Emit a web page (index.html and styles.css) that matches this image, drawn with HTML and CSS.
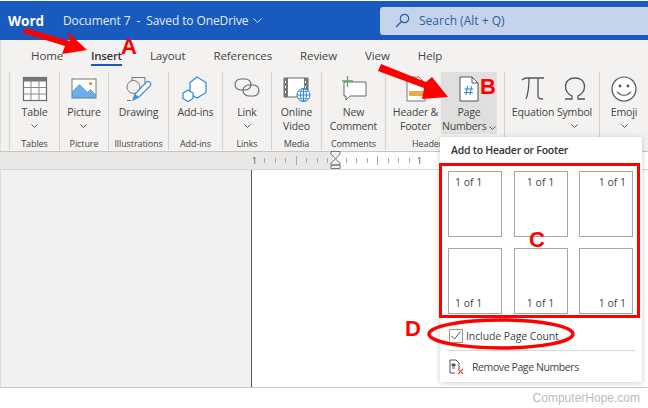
FILE: index.html
```html
<!DOCTYPE html>
<html lang="en">

<head>
    <title>Word page numbers</title>
    <meta charset="UTF-8">
    <meta name="viewport" content="width=device-width, initial-scale=1">
    <link rel="stylesheet" href="styles.css">
</head>

<body>
    <div class="app">
        <header class="titlebar">
            <div class="logo">Word</div>
            <div class="docname">Document 7 &nbsp;-&nbsp; Saved to OneDrive
                <svg class="chev" width="9" height="5" viewBox="0 0 9 5"><path d="M.5.5l4 4 4-4" fill="none" stroke="#dce6f5" stroke-width="1"/></svg>
            </div>
            <div class="search">
                <svg width="15" height="15" viewBox="0 0 15 15"><circle cx="9.5" cy="5.5" r="4.2" fill="none" stroke="#2b5fa8" stroke-width="1.2"/><path d="M6.5 8.5L1 14" stroke="#2b5fa8" stroke-width="1.4"/></svg>
                <span>Search (Alt + Q)</span>
            </div>
        </header>

        <nav class="tabs">
            <span>Home</span>
            <span class="active">Insert</span>
            <span>Layout</span>
            <span>References</span>
            <span>Review</span>
            <span>View</span>
            <span>Help</span>
        </nav>

        <section class="ribbon">
            <div class="group g-table">
                <div class="btns">
                    <div class="btn">
                        <svg class="ico" width="26" height="26" viewBox="0 0 26 26"><rect x="1.5" y="1.5" width="23" height="23" fill="#fff" stroke="#6b6b6b" stroke-width="1.2"/><path d="M1.5 1.5h23v4h-23z" fill="#777"/><path d="M1.5 11.5h23M1.5 18h23M9 5v19M17 5v19" stroke="#8a8a8a" fill="none"/></svg>
                        <div class="lbl">Table</div>
                        <svg class="drop" width="7" height="4" viewBox="0 0 7 4"><path d="M.5.5l3 3 3-3" fill="none" stroke="#555"/></svg>
                    </div>
                </div>
                <div class="glabel">Tables</div>
            </div>
            <div class="group g-picture">
                <div class="btns">
                    <div class="btn">
                        <svg class="ico" width="26" height="26" viewBox="0 0 26 26"><rect x="1" y="3" width="24" height="19" fill="#fff" stroke="#777"/><path d="M1.5 21.500v-6l7-7 8 8 3-3 5 5v3z" fill="#6aaeea" stroke="#3f87cc" stroke-width=".6"/><circle cx="19.5" cy="7.5" r="1.6" fill="#e8873a"/></svg>
                        <div class="lbl">Picture</div>
                        <svg class="drop" width="7" height="4" viewBox="0 0 7 4"><path d="M.5.5l3 3 3-3" fill="none" stroke="#555"/></svg>
                    </div>
                </div>
                <div class="glabel">Picture</div>
            </div>
            <div class="group g-draw">
                <div class="btns">
                    <div class="btn">
                        <svg class="ico" width="26" height="26" viewBox="0 0 26 26"><path d="M6 5V1.5h13V8" fill="none" stroke="#777"/><circle cx="7.500" cy="11" r="6.500" fill="none" stroke="#777"/><path d="M1 24.500h4" stroke="#777"/><path d="M7 24l2-6L20 6.500a2 2 0 0 1 4 3.500L13 21z" fill="#fff" stroke="#3d8fd6" stroke-width="1.200"/><path d="M7 24l2-6 4 3z" fill="#3d8fd6"/></svg>
                        <div class="lbl">Drawing</div>
                    </div>
                </div>
                <div class="glabel">Illustrations</div>
            </div>
            <div class="group g-addins">
                <div class="btns">
                    <div class="btn">
                        <svg class="ico" width="26" height="26" viewBox="0 0 26 26"><path d="M15 1l9 5.500v10L15 22l-7-4V6.500z" fill="#fff" stroke="#2b88d8" stroke-width="1.200"/><path d="M6 14l5 3v5.500L6 25.500l-5-3V17z" fill="#fff" stroke="#2b88d8" stroke-width="1.200"/></svg>
                        <div class="lbl">Add-ins</div>
                    </div>
                </div>
                <div class="glabel">Add-ins</div>
            </div>
            <div class="group g-link">
                <div class="btns">
                    <div class="btn">
                        <svg class="ico" width="26" height="26" viewBox="0 0 26 26"><rect x="1" y="3" width="16" height="11" rx="5.500" fill="none" stroke="#666" stroke-width="1.100"/><rect x="9" y="9" width="16" height="11" rx="5.500" fill="none" stroke="#666" stroke-width="1.100"/></svg>
                        <div class="lbl">Link</div>
                        <svg class="drop" width="7" height="4" viewBox="0 0 7 4"><path d="M.5.5l3 3 3-3" fill="none" stroke="#555"/></svg>
                    </div>
                </div>
                <div class="glabel">Links</div>
            </div>
            <div class="group g-media">
                <div class="btns">
                    <div class="btn">
                        <svg class="ico" width="28" height="26" viewBox="0 0 28 26"><path d="M1 2h24v19H1z" fill="#fff" stroke="#666"/><path d="M1 2h4v19H1zM21 2h4v19h-4z" fill="#777"/><path d="M2.500 5v2M2.500 10v2M2.500 15v2M22.500 5v2M22.500 10v2" stroke="#fff"/><circle cx="20.500" cy="19" r="6.500" fill="#fff" stroke="#2b88d8"/><path d="M14 19h13M20.500 12.500v13" stroke="#2b88d8"/><ellipse cx="20.500" cy="19" rx="3" ry="6.500" fill="none" stroke="#2b88d8"/><path d="M15 15.500h11M15 22.500h11" stroke="#2b88d8" stroke-width=".7"/></svg>
                        <div class="lbl">Online<br>Video</div>
                    </div>
                </div>
                <div class="glabel">Media</div>
            </div>
            <div class="group g-comments">
                <div class="btns">
                    <div class="btn">
                        <svg class="ico" width="26" height="26" viewBox="0 0 26 26"><path d="M3 6h22v14H9l-4 4v-4H3z" fill="#fff" stroke="#666"/><path d="M6.500 0v11M1 5h11" stroke="#5aa469" stroke-width="1.300"/></svg>
                        <div class="lbl">New<br>Comment</div>
                    </div>
                </div>
                <div class="glabel">Comments</div>
            </div>
            <div class="group g-header">
                <div class="btns">
                    <div class="btn b-hf">
                        <svg class="ico" width="20" height="26" viewBox="0 0 20 26"><path d="M1 1h12l6 6v18H1z" fill="#fff" stroke="#777"/><rect x="3" y="15" width="14" height="5" fill="#eba94a"/></svg>
                        <div class="lbl">Header &amp;<br>Footer</div>
                    </div>
                    <div class="btn b-page">
                        <svg class="ico" width="20" height="26" viewBox="0 0 20 26"><path d="M1 1h12l6 6v18H1z" fill="#fff" stroke="#555"/><path d="M13 1v6h6" fill="none" stroke="#555"/><path d="M8.500 10l-1.500 9M12.500 10l-1.500 9M5.500 13h9M5 16.500h9" stroke="#2b88d8" stroke-width="1.100"/></svg>
                        <div class="lbl">Page<br>Numbers <svg width="7" height="4" viewBox="0 0 7 4"><path d="M.5.5l3 3 3-3" fill="none" stroke="#555"/></svg></div>
                    </div>
                </div>
                <div class="glabel glabel-header">Header</div>
            </div>
            <div class="group g-symbols">
                <div class="btns">
                    <div class="btn b-eq">
                        <svg class="ico" width="24" height="26" viewBox="0 0 24 26"><path d="M1 4c2-2 3-2 5-2h17M8 2c0 9-1 16-3 21M17 2v18c0 2 1 3 5 3" fill="none" stroke="#555" stroke-width="1.300"/></svg>
                        <div class="lbl">Equation</div>
                    </div>
                    <div class="btn b-sym">
                        <svg class="ico" width="24" height="26" viewBox="0 0 24 26"><path d="M2 23h7v-3C5 18 2.500 15 2.500 10.500 2.500 5 6.500 2 12 2s9.500 3 9.500 8.500c0 4.500-2.500 7.500-6.500 9.500v3h7" fill="none" stroke="#555" stroke-width="1.300"/></svg>
                        <div class="lbl">Symbol</div>
                        <svg class="drop" width="7" height="4" viewBox="0 0 7 4"><path d="M.5.5l3 3 3-3" fill="none" stroke="#555"/></svg>
                    </div>
                </div>
            </div>
            <div class="group g-emoji">
                <div class="btns">
                    <div class="btn">
                        <svg class="ico" width="26" height="26" viewBox="0 0 26 26"><circle cx="13" cy="13" r="12" fill="#fff" stroke="#555" stroke-width="1.200"/><circle cx="9" cy="10" r="1.400" fill="#555"/><circle cx="17" cy="10" r="1.400" fill="#555"/><path d="M6.500 15.500c2 5 11 5 13 0" fill="none" stroke="#555" stroke-width="1.200"/></svg>
                        <div class="lbl">Emoji</div>
                        <svg class="drop" width="7" height="4" viewBox="0 0 7 4"><path d="M.5.5l3 3 3-3" fill="none" stroke="#555"/></svg>
                    </div>
                </div>
            </div>
        </section>

        <div class="ruler">
            <div class="ruler-off">
                <span class="num">1</span>
                <i></i><i></i><i></i><i class="long"></i><i></i><i></i><i></i>
            </div>
            <div class="ruler-on">
                <i></i><i></i><i></i><i class="long"></i><i></i><i></i><i></i><span class="num">1</span>
            </div>
        </div>

        <main class="docarea">
            <div class="margin"></div>
            <div class="page"></div>
        </main>

        <footer class="credit">ComputerHope.com</footer>

        <!-- indent marker on the ruler -->
        <svg class="indent" width="11" height="18" viewBox="0 0 11 18"><path d="M1 .5h9V3L5.500 8 1 3zM5.500 8L10 12v2H1v-2zM1 14h9v3.500H1z" fill="#f3f2f1" stroke="#777"/></svg>

        <div class="popup">
            <div class="popup-title">Add to Header or Footer</div>
            <div class="gallery">
                <div class="thumb t-left">1 of 1</div>
                <div class="thumb t-mid">1 of 1</div>
                <div class="thumb t-right">1 of 1</div>
                <div class="thumb t-left t-bottom">1 of 1</div>
                <div class="thumb t-mid t-bottom">1 of 1</div>
                <div class="thumb t-right t-bottom">1 of 1</div>
            </div>
            <div class="include">
                <span class="check"><svg width="10" height="9" viewBox="0 0 10 9"><path d="M.5 5l3 3 6-7.500" fill="none" stroke="#555"/></svg></span>
                <span>Include Page Count</span>
            </div>
            <div class="remove">
                <svg width="15" height="16" viewBox="0 0 15 16"><path d="M1 1h6l3 3v6M1 1v13h5" fill="none" stroke="#555"/><path d="M3 5h3v2H3zM3 9h3" stroke="#555" fill="#555"/><path d="M9 10l5 5M14 10l-5 5" stroke="#e8474c" stroke-width="1.100"/></svg>
                <span>Remove Page Numbers</span>
            </div>
        </div>

        <!-- red annotations -->
        <svg class="marks" width="648" height="408" viewBox="0 0 648 408">
            <polygon points="25,28 23,33 65,46 62,54 87,50 68,32 70,41" fill="#f00"/>
            <polygon points="381,64 378,71 424,88 422,99 448,97 432,77 426,82" fill="#f00"/>
            <ellipse cx="501" cy="334" rx="72" ry="14" fill="none" stroke="#f00" stroke-width="3.500"/>
        </svg>
        <span class="mark m-a">A</span>
        <span class="mark m-b">B</span>
        <span class="mark m-c">C</span>
        <span class="mark m-d">D</span>
    </div>
</body>

</html>
```

FILE: styles.css
```css
* {
    margin: 0;
    padding: 0;
    box-sizing: border-box;
}

body {
    width: 648px;
    height: 408px;
    overflow: hidden;
    background: #fff;
    font-family: "Open Sans", "Noto Sans", sans-serif;
    color: #444;
}

.app {
    position: relative;
    width: 648px;
    height: 408px;
    display: flex;
    flex-direction: column;
}

/* title bar */
.titlebar {
    height: 39px;
    margin-top: 1px;
    background: #185abd;
    display: flex;
    align-items: center;
    color: #e4ecf8;
}

.logo {
    width: 63px;
    padding-left: 8px;
    font-size: 13.5px;
    font-weight: 700;
    color: #fff;
}

.docname {
    width: 317px;
    font-size: 12px;
    letter-spacing: -.1px;
    white-space: nowrap;
}

.chev {
    margin-left: 1px;
    vertical-align: 2px;
}

.search {
    flex: 1;
    height: 28px;
    background: #c5d4ea;
    border-radius: 3px 0 0 3px;
    display: flex;
    align-items: center;
    gap: 9px;
    padding-left: 15px;
    font-size: 12px;
    color: #2b5fa8;
}

/* tabs */
.tabs {
    height: 30px;
    background: #f3f2f1;
    display: flex;
    align-items: center;
    gap: 28px;
    padding-left: 30px;
    font-size: 11.5px;
    letter-spacing: -.1px;
    color: #444;
    border-left: 1px solid #ddd;
}

.tabs .active {
    position: relative;
    font-weight: 600;
    letter-spacing: -.3px;
    color: #333;
}

.tabs .active:after {
    content: "";
    position: absolute;
    left: 0;
    right: 0;
    bottom: -3px;
    height: 2px;
    background: #185abd;
}

/* ribbon */
.ribbon {
    height: 81px;
    background: #f3f2f1;
    display: flex;
    padding: 2px 0 0 8px;
    border-left: 1px solid #ddd;
}

.group {
    height: 78px;
    border-left: 1px solid #d2d0ce;
    display: flex;
    flex-direction: column;
    align-items: center;
}

.g-table { width: 50px; }
.g-picture { width: 49px; }
.g-draw { width: 60px; }
.g-addins { width: 54px; }
.g-link { width: 49px; }
.g-media { width: 50px; }
.g-comments { width: 64px; }
.g-header { width: 119px; }
.g-symbols { width: 95px; }
.g-emoji { width: 49px; }

.btns {
    display: flex;
    flex: 1;
    width: 100%;
    justify-content: center;
}

.btn {
    display: flex;
    flex-direction: column;
    align-items: center;
    padding-top: 4px;
    font-size: 10.5px;
    letter-spacing: -.15px;
    white-space: nowrap;
}

.ico {
    height: 26px;
    flex: none;
}

.lbl {
    margin-top: 3px;
    line-height: 14px;
    text-align: center;
}

.drop {
    margin-top: 5px;
}

.glabel {
    font-size: 9px;
    letter-spacing: -.1px;
    line-height: 14px;
    margin-bottom: -1px;
}

.g-header .btns {
    justify-content: flex-start;
}

.b-hf {
    width: 55px;
    padding-left: 4px;
}

.b-page {
    width: 56px;
    height: 62px;
    background: #e1dfdd;
}

.glabel-header {
    align-self: flex-start;
    padding-left: 26px;
}

.g-symbols .btns {
    justify-content: flex-start;
}

.b-eq {
    width: 56px;
}

.b-sym {
    width: 27px;
}

/* ruler */
.ruler {
    height: 19px;
    background: #e9e8e7;
    border-top: 1px solid #c8c6c4;
    border-bottom: 1px solid #d8d6d4;
    display: flex;
    font-size: 9.5px;
    color: #555;
}

.ruler-off {
    width: 333px;
    display: flex;
    align-items: center;
    justify-content: flex-end;
}

.ruler-on {
    flex: 1;
    background: #fff;
    display: flex;
    align-items: center;
    padding-left: 8px;
}

.ruler i {
    width: 10.5px;
    height: 5px;
    background: linear-gradient(#aaa, #aaa) center / 1px 100% no-repeat;
}

.ruler i.long {
    height: 9px;
}

.ruler .num {
    width: 10px;
    text-align: center;
}

/* document */
.docarea {
    flex: 1;
    display: flex;
    border-bottom: 1px solid #c8c6c4;
}

.margin {
    width: 251px;
    background: #f1f1f1;
    border-left: 1px solid #ddd;
}

.page {
    flex: 1;
    background: #fff;
    border-left: 1px solid #555;
}

.credit {
    height: 20px;
    padding-right: 8px;
    text-align: right;
    font-family: "Liberation Sans", Arial, sans-serif;
    font-size: 12px;
    line-height: 20px;
    color: #bbb;
}

.indent {
    position: absolute;
    left: 330px;
    top: 151px;
}

/* page numbers menu */
.popup {
    position: absolute;
    left: 440px;
    top: 137px;
    width: 202px;
    height: 245px;
    background: #fff;
    box-shadow: 0 1px 6px rgba(0, 0, 0, .2);
    display: flex;
    flex-direction: column;
    font-size: 10.5px;
}

.popup-title {
    height: 26px;
    padding-left: 11px;
    font-size: 10.5px;
    font-weight: 600;
    letter-spacing: -.25px;
    line-height: 26px;
    color: #333;
}

.gallery {
    width: 201px;
    height: 155px;
    margin-left: -1px;
    border: 3px solid #f00;
    padding: 5px 6px 1px 6px;
    display: grid;
    grid-template-columns: 54px 54px 54px;
    grid-template-rows: 66px 66px;
    column-gap: 11.5px;
    row-gap: 11px;
}

.thumb {
    border: 1px solid #a6a6a6;
    padding: 2px 6px;
    line-height: 16px;
    display: flex;
}

.t-mid {
    justify-content: center;
}

.t-right {
    justify-content: flex-end;
}

.t-bottom {
    align-items: flex-end;
}

.include {
    height: 32px;
    padding: 3px 0 0 9px;
    display: flex;
    align-items: center;
    gap: 3px;
    letter-spacing: -.1px;
}

.check {
    width: 14px;
    height: 14px;
    border: 1px solid #999;
    background: #fff;
    display: flex;
    align-items: center;
    justify-content: center;
}

.remove {
    margin: 0 7px 0 8px;
    border-top: 1px solid #d6d6d6;
    padding: 8px 0 0 1px;
    display: flex;
    align-items: center;
    gap: 8px;
    letter-spacing: -.4px;
}

/* annotations */
.marks {
    position: absolute;
    left: 0;
    top: 0;
    pointer-events: none;
}

.mark {
    position: absolute;
    font-family: "Liberation Sans", Arial, sans-serif;
    font-weight: 700;
    color: #f00;
    line-height: 1;
    font-size: 22px;
}

.m-a { left: 121px; top: 36px; }
.m-b { left: 480px; top: 76px; }
.m-c { left: 529px; top: 229px; }
.m-d { left: 405px; top: 318px; }
```
